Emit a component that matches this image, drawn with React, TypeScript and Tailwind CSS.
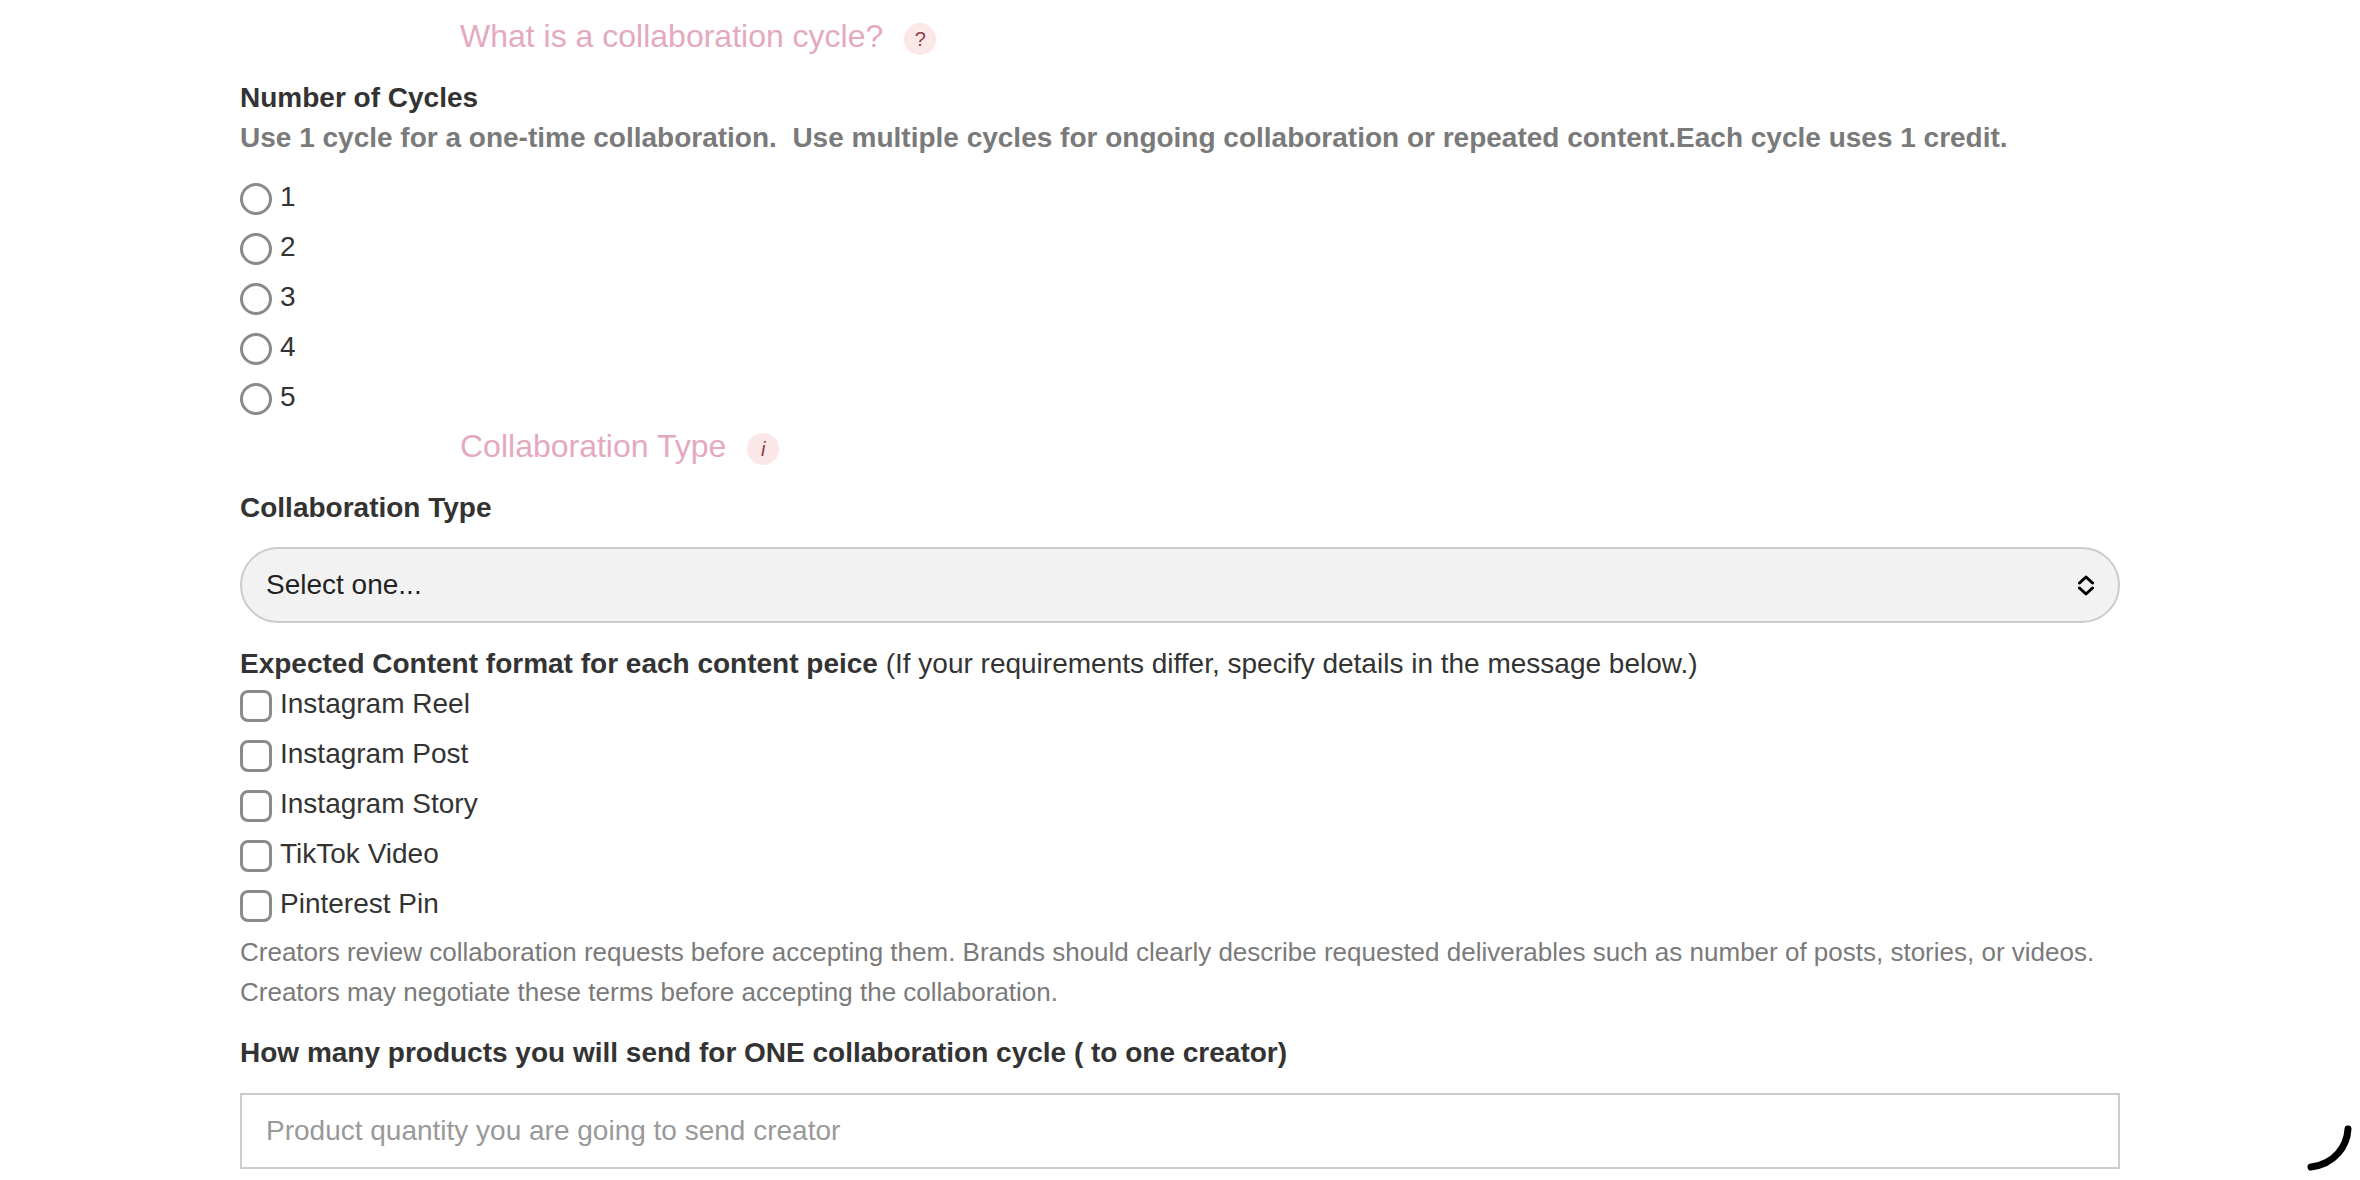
const cycles = ['1', '2', '3', '4', '5'];
const formats = ['Instagram Reel', 'Instagram Post', 'Instagram Story', 'TikTok Video', 'Pinterest Pin'];

function HelpHeading({ title, mark, italic }: { title: string; mark: string; italic?: boolean }) {
  return (
    <div className="flex items-center h-[48px] pl-[220px]">
      <span className="text-[32px] leading-[48px] text-[#e5a9bf]">{title}</span>
      <span
        className={`ml-[21px] mt-[6px] flex h-[32px] w-[32px] items-center justify-center rounded-full bg-[#fbe6e8] text-[20px] text-[#8f3b4f] ${italic ? 'italic' : ''}`}
      >
        {mark}
      </span>
    </div>
  );
}

export default function App() {
  return (
    <div className="relative h-[1180px] overflow-hidden bg-white font-['Liberation_Sans',Arial,sans-serif] text-[#333]">
      <div className="w-[1880px] ml-[240px]">
        <div className="pt-[12px]">
          <HelpHeading title="What is a collaboration cycle?" mark="?" />
        </div>

        <div className="mt-[18px] text-[28px] leading-[40px] font-bold">Number of Cycles</div>
        <div className="text-[28px] leading-[40px] font-bold text-[#7a7a7a]">
          Use 1 cycle for a one-time collaboration.&nbsp; Use multiple cycles for ongoing collaboration or repeated content.Each cycle uses 1 credit.
        </div>

        <div className="mt-[15px]">
          {cycles.map((c) => (
            <label key={c} className="flex h-[50px] items-center">
              <span className="mt-[2px] h-[32px] w-[32px] rounded-full border-[3px] border-[#8a8a8a]" />
              <span className="ml-[8px] text-[28px] leading-[40px] -mt-[2px]">{c}</span>
            </label>
          ))}
        </div>

        <div className="-mt-[1px]">
          <HelpHeading title="Collaboration Type" mark="i" italic />
        </div>

        <div className="mt-[18px] text-[28px] leading-[40px] font-bold">Collaboration Type</div>

        <div className="mt-[19px] flex h-[76px] items-center justify-between rounded-[38px] border-2 border-[#cccccc] bg-[#f2f2f2] pl-[24px] pr-[24px] text-[28px] text-[#222]">
          <span>Select one...</span>
          <svg width="16" height="21" viewBox="0 0 16 21" fill="none" stroke="#000" strokeWidth="3" strokeLinecap="round" strokeLinejoin="round">
            <path d="M1.5 8 8 2l6.5 6" />
            <path d="M1.5 13 8 19l6.5-6" />
          </svg>
        </div>

        <div className="mt-[21px] text-[28px] leading-[40px]">
          <span className="font-bold">Expected Content format for each content peice</span> (If your requirements differ, specify details in the message below.)
        </div>

        <div className="-mt-[4px]">
          {formats.map((f) => (
            <label key={f} className="flex h-[50px] items-center">
              <span className="mt-[2px] h-[32px] w-[32px] rounded-[8px] border-[3px] border-[#8a8a8a]" />
              <span className="ml-[8px] text-[28px] leading-[40px] -mt-[2px]">{f}</span>
            </label>
          ))}
        </div>

        <div className="mt-[3px] text-[26px] leading-[39.6px] text-[#7a7a7a]">
          Creators review collaboration requests before accepting them. Brands should clearly describe requested deliverables such as number of posts, stories, or videos.
          <br />
          Creators may negotiate these terms before accepting the collaboration.
        </div>

        <div className="mt-[21px] text-[28px] leading-[40px] font-bold">How many products you will send for ONE collaboration cycle ( to one creator)</div>

        <div className="mt-[20px] flex h-[76px] items-center border-2 border-[#cccccc] bg-white px-[24px] text-[28px] text-[#999]">
          Product quantity you are going to send creator
        </div>
      </div>

      {/* spinner over the corner */}
      <svg className="absolute left-[2300px] top-[1120px]" width="60" height="60" viewBox="0 0 60 60" fill="none">
        <path d="M48 9 C47 26 35 44 11 47" stroke="#000" strokeWidth="7" strokeLinecap="round" />
      </svg>
    </div>
  );
}
